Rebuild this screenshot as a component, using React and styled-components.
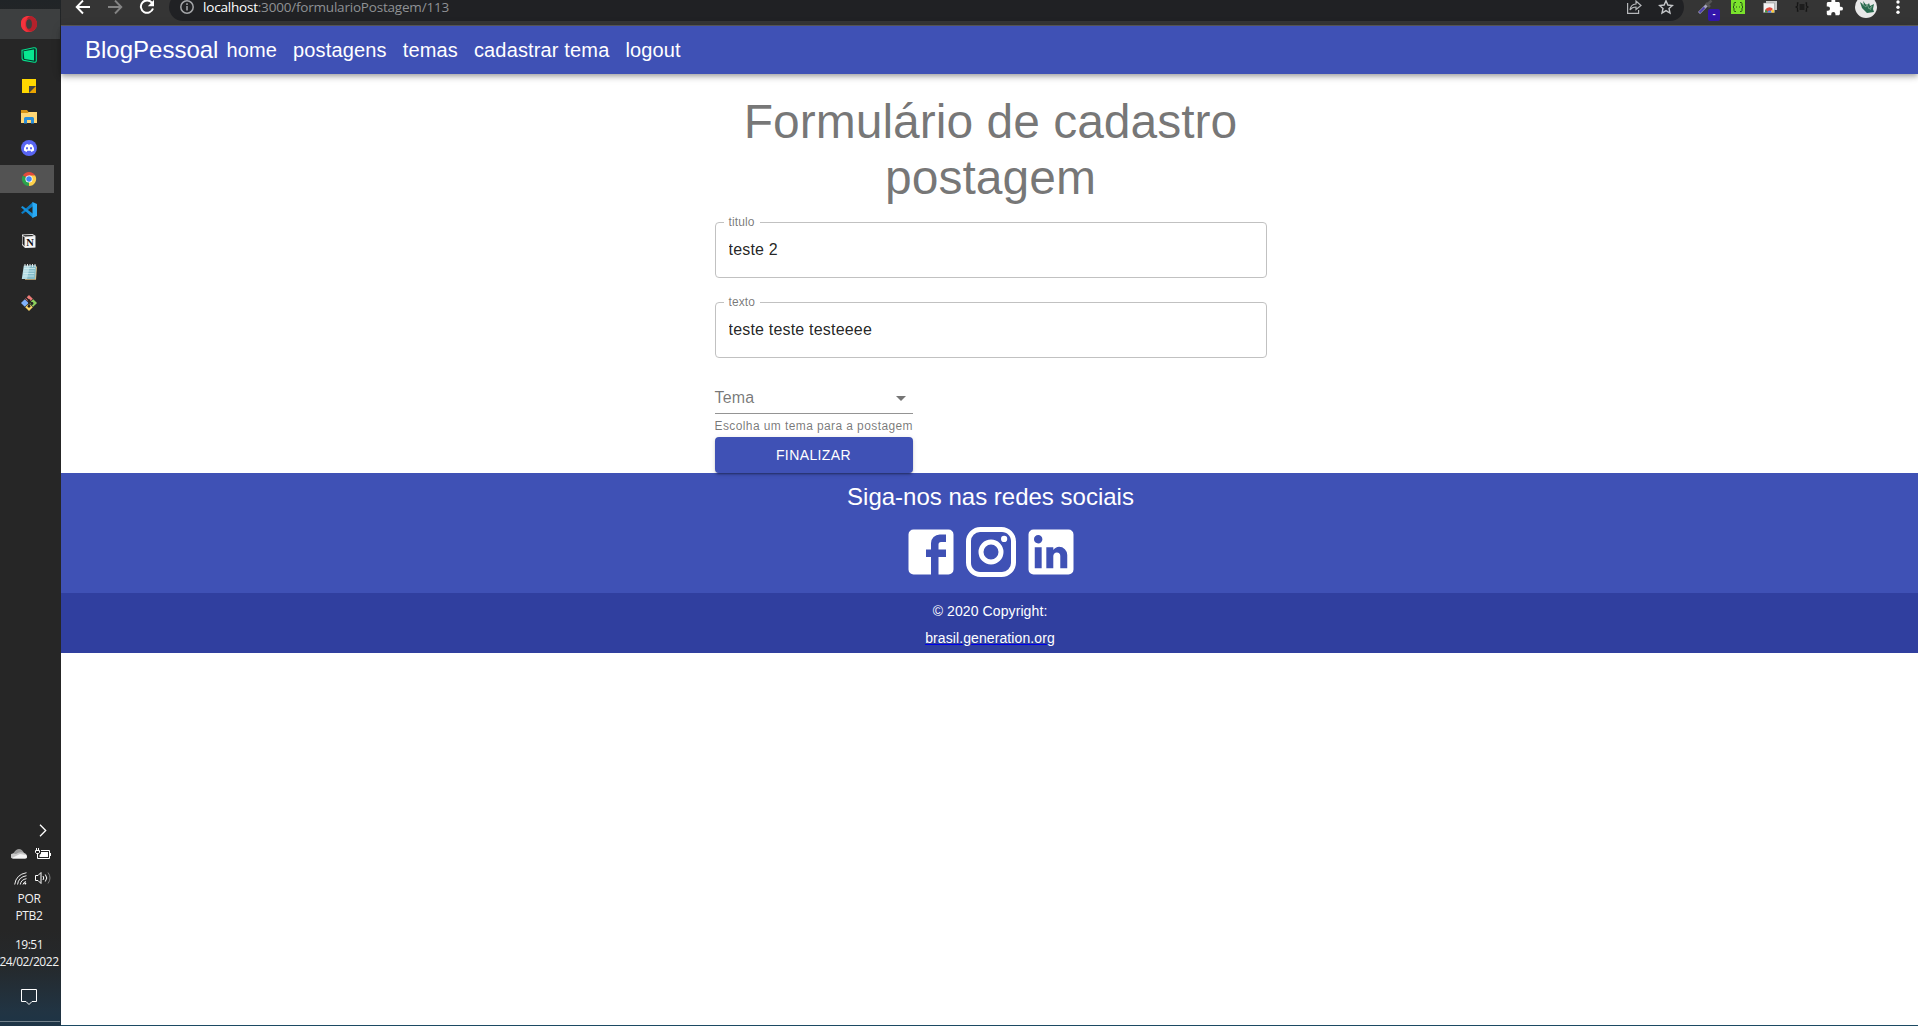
import React from 'react';
import styled, { createGlobalStyle, css } from 'styled-components';

const GlobalStyle = createGlobalStyle`
  *, *::before, *::after { box-sizing: border-box; }
  body { margin: 0; background: #fff; font-family: "Liberation Sans", Arial, sans-serif; overflow: hidden; }
  h3, h5, h6, p { margin: 0; font-weight: 400; }
`;

const system = css`font-family: "Open Sans", "Noto Sans", sans-serif;`;

const Desktop = styled.div`
  display: flex;
  width: 100vw;
  height: 100vh;
  border-bottom: 1px solid #1c4a63;
`;

/* ---------- Taskbar ---------- */
const Taskbar = styled.aside`
  ${system}
  width: 61px;
  flex: none;
  height: 100vh;
  padding-top: 9px;
  display: flex;
  flex-direction: column;
  color: #f2f2f2;
  background: linear-gradient(#202427 0, #262626 40px, #262626 930px, #25292c 965px, #213443 1012px, #1d3446 100%);
`;

const AppSlot = styled.div`
  width: ${p => (p.$wide ? 60 : 54)}px;
  height: ${p => (p.$wide ? 30 : 28)}px;
  margin-bottom: ${p => (p.$wide ? 2 : 3)}px;
  padding-left: 21px;
  display: flex;
  align-items: center;
  background: ${p => p.$bg || 'transparent'};
  svg { display: block; }
`;

const Tray = styled.div`
  margin-top: auto;
  display: flex;
  flex-direction: column;
  align-items: center;
  width: 58px;
`;

const TrayRow = styled.div`
  display: flex;
  align-items: center;
  justify-content: flex-end;
  gap: 8px;
  width: 100%;
  height: 24px;
  padding-right: ${p => p.$end ?? 7}px;
`;

const TrayText = styled.span`
  font-size: 12px;
  line-height: 17px;
  letter-spacing: ${p => p.$spacing || '-0.3px'};
  white-space: nowrap;
  margin-top: ${p => p.$top || 0}px;
`;

const Notice = styled.div`
  height: 51px;
  width: 58px;
  padding: 19px 0 0 21px;
  align-self: flex-start;
`;

const ShowDesktop = styled.div`
  width: 60px;
  align-self: flex-start;
  height: 5px;
  border-top: 1px solid #71808a;
`;

/* ---------- Browser ---------- */
const Browser = styled.div`
  flex: 1;
  min-width: 0;
  display: flex;
  flex-direction: column;
  background: #fff;
`;

const BrowserBar = styled.div`
  ${system}
  height: 26px;
  flex: none;
  overflow: hidden;
  background: #353535;
  border-bottom: 1px solid #5b5b5b;
`;

const BarRow = styled.div`
  margin-top: -7px;
  height: 28px;
  padding: 0 4px 0 6px;
  display: flex;
  align-items: center;
`;

const IconSlot = styled.div`
  width: 32px;
  height: 28px;
  position: relative;
  display: flex;
  align-items: center;
  justify-content: center;
`;

const AddressPill = styled.div`
  flex: 1;
  height: 28px;
  margin: 0 6px;
  padding: 0 2px 0 10px;
  border-radius: 14px;
  background: #202124;
  display: flex;
  align-items: center;
`;

const Address = styled.span`
  flex: 1;
  margin-left: 8px;
  font-size: 13.5px;
  line-height: 14px;
  letter-spacing: -0.2px;
  color: #8f9194;
  b { font-weight: 400; color: #fff; }
`;

const Badge = styled.span`
  position: absolute;
  left: 18px;
  top: 16px;
  width: 12px;
  height: 12px;
  border-radius: 2px;
  background: #3316ac;
  color: #fff;
  font: bold 9px/10px "Liberation Sans", sans-serif;
  text-align: center;
`;

/* ---------- Blog ---------- */
const AppBar = styled.header`
  position: relative;
  z-index: 1;
  height: 48px;
  flex: none;
  padding: 0 24px;
  display: flex;
  align-items: center;
  background: #3f51b5;
  color: #fff;
  box-shadow: 0 2px 4px -1px rgba(0,0,0,.2), 0 4px 5px rgba(0,0,0,.14), 0 1px 10px rgba(0,0,0,.12);
`;

const Brand = styled.h5`
  font-size: 24px;
  line-height: 32px;
`;

const Nav = styled.nav` display: flex; `;

const NavItem = styled.h6`
  margin: 0 8px;
  font-size: 20px;
  line-height: 32px;
  letter-spacing: 0.0075em;
`;

const Page = styled.main`
  display: flex;
  flex-direction: column;
`;

const FormArea = styled.form`
  width: 554px;
  margin: 0 auto;
  padding: 20px 0 0 2px;
  display: flex;
  flex-direction: column;
`;

const Title = styled.h3`
  font-size: 48px;
  line-height: 56px;
  text-align: center;
  color: rgba(0,0,0,.54);
  margin-bottom: 11px;
`;

const Field = styled.fieldset`
  height: 61px;
  margin: 0 0 19px;
  padding: 0 8px;
  min-width: 0;
  border: 1px solid #c1c1c1;
  border-radius: 4px;
`;

const FieldLabel = styled.legend`
  padding: 0 5px;
  height: 11px;
  font-size: 12px;
  line-height: 11px;
  letter-spacing: 0.00938em;
  color: rgba(0,0,0,.54);
`;

const FieldInput = styled.input`
  display: block;
  width: 100%;
  height: 19px;
  margin-top: 12px;
  padding: 0 5px;
  border: 0;
  outline: 0;
  background: none;
  font: 16px/19px "Liberation Sans", Arial, sans-serif;
  letter-spacing: 0.012em;
  color: rgba(0,0,0,.87);
`;

const ThemeControl = styled.div`
  width: 198px;
  display: flex;
  flex-direction: column;
`;

const Select = styled.div`
  height: 32px;
  margin-top: 5px;
  display: flex;
  align-items: center;
  justify-content: space-between;
  border-bottom: 1px solid #949494;
  font-size: 16px;
  letter-spacing: 0.00938em;
  color: rgba(0,0,0,.54);
`;

const Helper = styled.p`
  margin: 2px 0 1px;
  font-size: 12px;
  line-height: 20px;
  letter-spacing: 0.03333em;
  white-space: nowrap;
  color: rgba(0,0,0,.54);
`;

const Submit = styled.button`
  position: relative;
  height: 36px;
  border: 0;
  border-radius: 4px;
  background: #3f51b5;
  color: #fff;
  font: 500 14px/24px "Liberation Sans", Arial, sans-serif;
  letter-spacing: 0.02857em;
  text-transform: uppercase;
  box-shadow: 0 3px 1px -2px rgba(0,0,0,.2), 0 2px 2px rgba(0,0,0,.14), 0 1px 5px rgba(0,0,0,.12);
`;

const Social = styled.section`
  height: 120px;
  padding: 8px 0 0 2px;
  display: flex;
  flex-direction: column;
  align-items: center;
  background: #3f51b5;
  color: #fff;
`;

const SocialTitle = styled.h5`
  font-size: 24px;
  line-height: 32px;
  margin-bottom: 9px;
`;

const SocialLinks = styled.div`
  display: flex;
  svg { display: block; width: 60px; height: 60px; fill: #fff; }
`;

const Copyright = styled.section`
  height: 60px;
  padding: 7px 0 0 1px;
  display: flex;
  flex-direction: column;
  align-items: center;
  gap: 5px;
  background: #303f9f;
  color: #fff;
  font-size: 14px;
  line-height: 22px;
  letter-spacing: 0.00714em;
`;

const SiteLink = styled.a`
  color: #fff;
  text-decoration: underline #0000ee;
`;

/* ---------- Taskbar icons ---------- */
const Svg = ({ s = 16, children, ...rest }) => (
  <svg width={s} height={s} viewBox="0 0 16 16" fill="none" {...rest}>{children}</svg>
);

const Opera = () => (
  <Svg>
    <circle cx="8" cy="8" r="8" fill="#e22a33" />
    <path d="M8 0a8 8 0 0 1 5 14.200C10 16 7 15 6 12l3-1V4L6 3C7 1 8 0 10 .3z" fill="#b3212b" />
    <path d="M9 0C2-.5-1 4 .2 10c1 4 4 6 7.800 6-3-1-4-4-4-8s2-7 5-8z" fill="#f5333d" />
    <ellipse cx="8" cy="8" rx="2.900" ry="4.800" fill="#3d3e3f" />
  </Svg>
);
const Camtasia = () => (
  <Svg>
    <path d="M1 3.200 12.500.8c1.800-.3 2.800.2 2.800 1.500v11.500c0 1.200-1 1.700-2.200 1.400L3 13.400c-1.300-.3-1.800-.8-1.900-1.800z" fill="#07352a" stroke="#08dc8b" strokeWidth="1.100" />
    <path d="M2.500 4.300 13 2.400v11.100l-9.700-1.600z" fill="#08e890" />
  </Svg>
);
const Sticky = () => (
  <Svg>
    <path d="M1 1h14v14H1z" fill="#ffd800" />
    <path d="M8 8h7v7H8z" fill="#eba400" />
    <path d="M8 8h7l-7 7z" fill="#414344" />
  </Svg>
);
const Folder = () => (
  <Svg>
    <path d="M0 1h6l1.500 2H15v4H0z" fill="#d99516" />
    <path d="M0 4h6.500L8 3h8v11H0z" fill="#ffd775" />
    <path d="M3 14.500V9.500Q3 8 4.500 8h7Q13 8 13 9.500v5h-3V11H6v3.500z" fill="#2b8ed9" />
  </Svg>
);
const Discord = () => (
  <Svg>
    <circle cx="8" cy="8" r="8" fill="#5865f2" />
    <path d="M4.500 5Q5.700 4.200 7 4l.4.700h1.200L9 4q1.300.2 2.500 1 2 3 1.600 5.600-1.300 1-2.700 1.300l-.6-1.200H6.200l-.6 1.200q-1.400-.3-2.700-1.300Q2.500 8 4.500 5z" fill="#fff" />
    <ellipse cx="6" cy="8.300" rx="1" ry="1.200" fill="#5865f2" /><ellipse cx="10" cy="8.300" rx="1" ry="1.200" fill="#5865f2" />
  </Svg>
);
const ChromeLogo = () => (
  <svg width="16" height="16" viewBox="-1 -1 18 18">
    <path d="M8 8 1.070 4A8 8 0 0 1 14.930 4z" fill="#e24a3b" />
    <path d="M8 8 14.930 4A8 8 0 0 1 8 16z" fill="#fdd04b" />
    <path d="M8 8v8A8 8 0 0 1 1.070 4z" fill="#2ba24c" />
    <path d="M8 4h6.930L11.500 10 8 16z" fill="#fdd04b" />
    <circle cx="8" cy="8" r="4" fill="#fff" /><circle cx="8" cy="8" r="3.100" fill="#4285f4" />
  </svg>
);
const Code = () => (
  <Svg>
    <path d="M12 0v4.200L1.500 12 0 10.700z" fill="#0b7cc4" />
    <path d="M0 5.300 1.500 4 12 11.800V16z" fill="#1591dc" />
    <path d="M11.500 0 16 2v12l-4.500 2z" fill="#2aaaf4" />
  </Svg>
);
const Notion = () => (
  <Svg>
    <path d="M1 1.500 11.500 1 14.500 2.800V14.500L4 15 1 12z" fill="#e9e9e9" />
    <path d="M1.800 2.200 11 1.900l2 1.200-9 .4z" fill="#222" /><path d="M1.600 3 3.500 4.200v9L1.600 11z" fill="#222" />
    <path d="M4.500 4.300h9.300v10l-9.300.3z" fill="#f7f7f7" />
    <text x="5.200" y="12.700" fontFamily="Liberation Serif, serif" fontWeight="700" fontSize="10.500" fill="#111">N</text>
  </Svg>
);
const Notepad = () => (
  <Svg>
    <path d="M3 2.500h13l-1 13.300H4z" fill="#d9bd85" />
    <path d="M2.800 1.500H15L14 15H.8z" fill="#b4dce4" /><path d="M9 1.500h6L14 15H6z" fill="#84bcc8" />
    <path d="M3 4.500h11M2.600 7h11M2.300 9.500h11M2 12h11" stroke="#d8f0f4" strokeWidth=".7" />
    <path d="M4 0v3M6.500 0v3M9 0v3M11.500 0v3M14 0v3" stroke="#dde6e8" />
  </Svg>
);
const Git = () => (
  <Svg>
    <path d="m8 0 3.800 3.800L8 7.600 4.200 3.800z" fill="#ee7d79" /><path d="m12.200 4.200 3.800 3.800-3.800 3.800L8.400 8z" fill="#8ed05d" />
    <path d="m8 8.400 3.800 3.800L8 16l-3.800-3.800z" fill="#f9d56b" /><path d="m3.800 4.200 3.800 3.800-3.800 3.800L0 8z" fill="#80b2fa" />
    <path d="m5 2.500 6 6M8 5.500v6.500" stroke="#232323" strokeWidth="1.400" />
    <circle cx="8" cy="5.700" r="1.400" fill="#232323" /><circle cx="11" cy="8.500" r="1.400" fill="#232323" /><circle cx="8" cy="11.300" r="1.400" fill="#232323" />
  </Svg>
);

const apps = [
  { Icon: Opera, wide: true, bg: '#3d3f40' },
  { Icon: Camtasia }, { Icon: Sticky }, { Icon: Folder }, { Icon: Discord },
  { Icon: ChromeLogo, bg: '#535353' },
  { Icon: Code }, { Icon: Notion }, { Icon: Notepad }, { Icon: Git },
];

const SystemTray = () => (
  <Tray>
    <TrayRow $end={11}><svg width="8" height="13" viewBox="0 0 8 13" fill="none" stroke="#fff" strokeWidth="1.300"><path d="m1 .7 5.700 5.800L1 12.300" /></svg></TrayRow>
    <TrayRow>
      <svg width="16" height="12" viewBox="0 0 16 12"><path d="M3 9.500a3 3 0 0 1 0-5Q5 1 8 1t5 4z" fill="#9a9a9a" /><path d="M2 10.500a2.500 2.500 0 0 1 0-5q2 0 3 .5 3-2.500 7-1.500 4 1 4 4-.2 2-2 2z" fill="#c8c8c8" /><path d="M1 10 9 6l6 1q1 1 1 2 0 1.500-2 1.500H2z" fill="#f4f4f4" /></svg>
      <svg width="16" height="12" viewBox="0 0 16 12" fill="none" stroke="#fff">
        <path d="M1.500 0v2M3.500 0v2M.5 2.500h4v2L3.500 5.500h-2L.5 4.500zM2.500 6v3" />
        <path d="M6 2.500h8.500v8h-12V8M15.500 5v3" />
        <path d="M6 4h7v5H4.500V7L6 5.500z" fill="#fff" stroke="none" />
      </svg>
    </TrayRow>
    <TrayRow $end={6}>
      <svg width="13" height="13" viewBox="0 0 13 13" fill="none" stroke="#eee"><path d="M.7 12.500Q2 2.500 12.500.7M3.500 12.500Q4.500 5 12.500 3.700M6.300 12.500Q7 7.500 12.500 6.700" /><path d="M9 12.500q.5-2.500 3-3" /><circle cx="11.300" cy="11.500" r="1" fill="#fff" stroke="none" /></svg>
      <svg width="17" height="14" viewBox="0 0 17 14" fill="none" stroke="#fff"><path d="M.5 4.500H3L6 1.500v11L3 9.500H.5z" /><path d="M8 5q1.500 2 0 4M10.300 3.500q3 3.500 0 7" /><path d="M13 1.500q4 5.500 0 11" stroke="#7d7d7d" /></svg>
    </TrayRow>
    <TrayText>POR</TrayText>
    <TrayText>PTB2</TrayText>
    <TrayText $top={12} $spacing="-0.5px">19:51</TrayText>
    <TrayText $spacing="-0.45px">24/02/2022</TrayText>
    <Notice>
      <svg width="16" height="17" viewBox="0 0 16 17" fill="none" stroke="#fff"><path d="M.5.5h15v12H11l-3 3-3-3H.5z" /></svg>
    </Notice>
    <ShowDesktop />
  </Tray>
);

const BrowserToolbar = () => (
  <BrowserBar>
    <BarRow>
      <IconSlot><svg width="16" height="16" viewBox="0 0 16 16" fill="none" stroke="#fff" strokeWidth="1.900"><path d="M15 8H2M8 1.500 1.700 8 8 14.500" /></svg></IconSlot>
      <IconSlot><svg width="16" height="16" viewBox="0 0 16 16" fill="none" stroke="#848484" strokeWidth="1.900"><path d="M1 8h13M8 1.500 14.300 8 8 14.500" /></svg></IconSlot>
      <IconSlot><svg width="16" height="16" viewBox="0 0 16 16" fill="none" stroke="#fff" strokeWidth="2"><path d="M13 3.800A6.200 6.200 0 1 0 14 9.500" /><path d="M15 .8v6.400H8.800z" fill="#fff" stroke="none" /></svg></IconSlot>
      <AddressPill>
        <svg width="16" height="16" viewBox="0 0 16 16" fill="none" stroke="#a3a5a8" strokeWidth="1.500"><circle cx="8" cy="8" r="6.200" /><path d="M8 7v4.500M8 4.300v1.600" /></svg>
        <Address><b>localhost</b>:3000/formularioPostagem/113</Address>
        <IconSlot><svg width="16" height="16" viewBox="0 0 16 16" fill="none" stroke="#b5b7ba" strokeWidth="1.200"><path d="M1.600 4v10.400h11V11" /><path d="M4 11Q4.500 5.500 10 5V2l5 4.500-5 4V8Q6 8 4 11z" /></svg></IconSlot>
        <IconSlot><svg width="16" height="16" viewBox="0 0 16 16" fill="none" stroke="#c4c6c9" strokeWidth="1.400"><path d="m8 1.700 1.850 4.300 4.650.45-3.500 3.050 1 4.500L8 11.650 4 14l1-4.500L1.500 6.450 6.150 6z" /></svg></IconSlot>
      </AddressPill>
      <IconSlot>
        <svg width="16" height="16" viewBox="0 0 16 16" fill="none"><path d="m1 14 9-9" stroke="#a6a6bd" strokeWidth="3" /><path d="m1.500 13.500 5-5" stroke="#493cae" strokeWidth="1.800" /><path d="m8 4 4 4M10 5l3.500-3.500" stroke="#555" strokeWidth="2.600" /></svg>
        <Badge>-</Badge>
      </IconSlot>
      <IconSlot><svg width="14" height="14" viewBox="0 0 14 14"><path d="M0 0h14v14H0z" fill="#7be22c" /><path d="M5 2.500H4q-1 0-1 1V6L2 7l1 1v2.500q0 1 1 1h1M9 2.500h1q1 0 1 1V6l1 1-1 1v2.500q0 1-1 1H9M5 7h1M8 7h1" fill="none" stroke="#264f19" /></svg></IconSlot>
      <IconSlot><svg width="16" height="16" viewBox="0 0 16 16"><path d="M4 2h11v9H4z" fill="#c8c8c8" /><path d="M1.500 4h11v9.500h-11z" fill="#f3f3f3" stroke="#888" strokeWidth=".5" /><path d="M3 13.500a4.500 4.500 0 0 1 8-3.500L7.500 13.500z" fill="#df4a3d" /><path d="M3 13.500q0-2 .8-3L6 13.500z" fill="#2ba24c" /><path d="m10 11 1.500-.5q.6 1 .6 3H9z" fill="#fbc934" /><path d="M5.500 13.500a2 2 0 0 1 4 0z" fill="#4285f4" /></svg></IconSlot>
      <IconSlot><svg width="14" height="10" viewBox="0 0 14 10" fill="none" stroke="#161616" strokeWidth="1.300"><path d="M3.500 1h-1v3L1 5l1.500 1v3h1M10.500 1h1v3L13 5l-1.500 1v3h-1M4.500 3h5M4.500 5h5M4.500 7h5" /></svg></IconSlot>
      <IconSlot><svg width="17" height="17" viewBox="1 1 22 22" fill="#fff"><path d="M20.500 11H19V7c0-1.100-.9-2-2-2h-4V3.500a2.500 2.500 0 0 0-5 0V5H4c-1.100 0-2 .9-2 2v3.800h1.500a2.700 2.700 0 0 1 0 5.400H2V20c0 1.100.9 2 2 2h3.800v-1.500a2.700 2.700 0 0 1 5.400 0V22H17c1.100 0 2-.9 2-2v-4h1.500a2.500 2.500 0 0 0 0-5z" /></svg></IconSlot>
      <IconSlot><svg width="22" height="22" viewBox="0 0 22 22"><circle cx="11" cy="11" r="11" fill="#e8e8e8" /><path d="m5 6 4 3-1-4 4 5 2-3 1 3 4-2-1 5 1 3-7 1-5-5-1-3z" fill="#286a4e" /><path d="m7 8 4 3 1-3 2 5 3-3-2 4" fill="none" stroke="#6c9a82" /></svg></IconSlot>
      <IconSlot><svg width="4" height="14" viewBox="0 0 4 14" fill="#fff"><circle cx="2" cy="2" r="1.700" /><circle cx="2" cy="7.200" r="1.700" /><circle cx="2" cy="12.300" r="1.700" /></svg></IconSlot>
    </BarRow>
  </BrowserBar>
);

const socials = [
  'M5 3h14a2 2 0 0 1 2 2v14a2 2 0 0 1-2 2H5a2 2 0 0 1-2-2V5a2 2 0 0 1 2-2m13 2h-2.500A3.500 3.500 0 0 0 12 8.500V11h-2v3h2v7h3v-7h3v-3h-3V9a1 1 0 0 1 1-1h2V5z',
  'M7.800 2h8.400C19.400 2 22 4.600 22 7.800v8.400a5.800 5.800 0 0 1-5.800 5.800H7.800C4.600 22 2 19.400 2 16.200V7.800A5.800 5.800 0 0 1 7.800 2m-.2 2A3.600 3.600 0 0 0 4 7.600v8.800C4 18.390 5.610 20 7.600 20h8.800a3.600 3.600 0 0 0 3.600-3.600V7.600C20 5.610 18.390 4 16.400 4H7.600m9.650 1.500a1.250 1.250 0 0 1 1.250 1.250A1.250 1.250 0 0 1 17.250 8 1.250 1.250 0 0 1 16 6.750a1.250 1.250 0 0 1 1.250-1.250M12 7a5 5 0 0 1 5 5 5 5 0 0 1-5 5 5 5 0 0 1-5-5 5 5 0 0 1 5-5m0 2a3 3 0 0 0-3 3 3 3 0 0 0 3 3 3 3 0 0 0 3-3 3 3 0 0 0-3-3z',
  'M19 3a2 2 0 0 1 2 2v14a2 2 0 0 1-2 2H5a2 2 0 0 1-2-2V5a2 2 0 0 1 2-2h14m-.5 15.500v-5.300a3.260 3.260 0 0 0-3.260-3.260c-.85 0-1.840.52-2.320 1.300v-1.110h-2.790v8.370h2.790v-4.930c0-.77.62-1.400 1.390-1.400a1.400 1.400 0 0 1 1.400 1.400v4.930h2.790M6.880 8.560a1.680 1.680 0 0 0 1.680-1.680c0-.93-.75-1.690-1.680-1.690a1.690 1.690 0 0 0-1.690 1.690c0 .93.76 1.680 1.690 1.680m1.390 9.940v-8.370H5.500v8.370h2.770z',
];

export default function App() {
  return (
    <Desktop>
      <GlobalStyle />
      <Taskbar>
        {apps.map(({ Icon, wide, bg }, i) => (
          <AppSlot key={i} $wide={wide} $bg={bg}><Icon /></AppSlot>
        ))}
        <SystemTray />
      </Taskbar>
      <Browser>
        <BrowserToolbar />
        <AppBar>
          <Brand>BlogPessoal</Brand>
          <Nav>
            {['home', 'postagens', 'temas', 'cadastrar tema', 'logout'].map(t => <NavItem key={t}>{t}</NavItem>)}
          </Nav>
        </AppBar>
        <Page>
          <FormArea onSubmit={e => e.preventDefault()}>
            <Title>Formulário de cadastro postagem</Title>
            <Field>
              <FieldLabel>titulo</FieldLabel>
              <FieldInput defaultValue="teste 2" />
            </Field>
            <Field>
              <FieldLabel>texto</FieldLabel>
              <FieldInput defaultValue="teste teste testeeee" />
            </Field>
            <ThemeControl>
              <Select>
                <span>Tema</span>
                <svg width="24" height="24" viewBox="0 0 24 24" fill="#757575"><path d="m7 10 5 5 5-5z" /></svg>
              </Select>
              <Helper>Escolha um tema para a postagem</Helper>
              <Submit>Finalizar</Submit>
            </ThemeControl>
          </FormArea>
          <Social>
            <SocialTitle>Siga-nos nas redes sociais</SocialTitle>
            <SocialLinks>
              {socials.map((d, i) => <svg key={i} viewBox="0 0 24 24"><path d={d} /></svg>)}
            </SocialLinks>
          </Social>
          <Copyright>
            <span>© 2020 Copyright:</span>
            <SiteLink>brasil.generation.org</SiteLink>
          </Copyright>
        </Page>
      </Browser>
    </Desktop>
  );
}
